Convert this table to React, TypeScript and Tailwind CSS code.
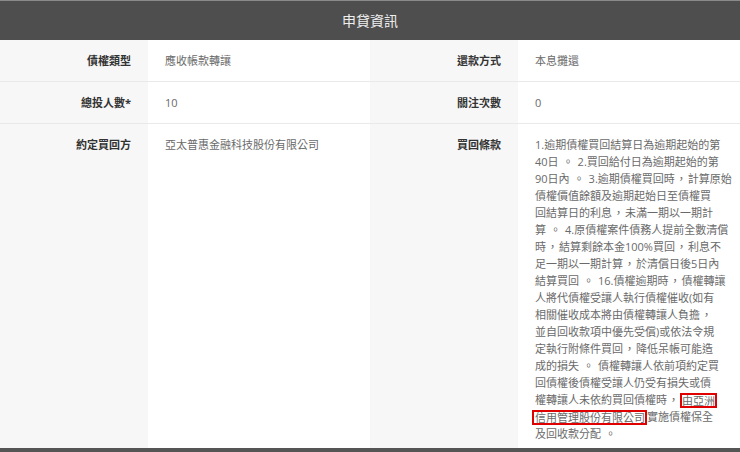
import React from "react";

const FONT = "font-['Open_Sans','Noto_Sans_CJK_TC',sans-serif]";

function fmt(s: string): React.ReactNode[] {
  const out: React.ReactNode[] = [];
  let buf = "";
  let k = 0;
  for (const ch of s) {
    if (ch === "。") {
      if (buf) out.push(buf);
      buf = "";
      out.push(
        <span key={k++} className="inline-block w-[19px] text-center">
          。
        </span>
      );
    } else if (ch === "，") {
      if (buf) out.push(buf);
      buf = "";
      out.push(
        <span key={k++} className="inline-block w-[13px] text-center">
          ，
        </span>
      );
    } else {
      buf += ch;
    }
  }
  if (buf) out.push(buf);
  return out;
}

const lines: React.ReactNode[] = [
  fmt("1.逾期債權買回結算日為逾期起始的第"),
  fmt("40日。2.買回給付日為逾期起始的第"),
  fmt("90日內。3.逾期債權買回時，計算原始"),
  fmt("債權價值餘額及逾期起始日至債權買"),
  fmt("回結算日的利息，未滿一期以一期計"),
  fmt("算。4.原債權案件債務人提前全數清償"),
  fmt("時，結算剩餘本金100%買回，利息不"),
  fmt("足一期以一期計算，於清償日後5日內"),
  fmt("結算買回。16.債權逾期時，債權轉讓"),
  fmt("人將代債權受讓人執行債權催收(如有"),
  fmt("相關催收成本將由債權轉讓人負擔，"),
  fmt("並自回收款項中優先受償)或依法令規"),
  fmt("定執行附條件買回，降低呆帳可能造"),
  fmt("成的損失。債權轉讓人依前項約定買"),
  fmt("回債權後債權受讓人仍受有損失或債"),
  <>
    {fmt("權轉讓人未依約買回債權時，")}
    <span className="inline-block border-2 border-[#e00000] leading-[11px] align-middle -mt-[2px]">由亞洲</span>
  </>,
  <>
    <span className="inline-block border-2 border-[#e00000] leading-[11px] align-middle -ml-[3px] pl-px -mt-[2px]">信用管理股份有限公司</span>
    實施債權保全
  </>,
  fmt("及回收款分配。"),
];

function Label({ children, last }: { children: React.ReactNode; last?: boolean }) {
  return (
    <div
      className={`bg-[#f7f7f7] text-right pr-[17px] font-bold text-[#333] pt-3 ${
        last ? "pb-[6px]" : "pb-3 border-b border-[#e9e9e9]"
      }`}
    >
      {children}
    </div>
  );
}

function Value({ children, last }: { children: React.ReactNode; last?: boolean }) {
  return (
    <div
      className={`bg-white pl-[17px] text-[#6a6a6a] pt-3 ${
        last ? "pb-[6px]" : "pb-3 border-b border-[#e9e9e9]"
      }`}
    >
      {children}
    </div>
  );
}

export default function App() {
  return (
    <div lang="zh-TW" className={`w-[740px] h-[452px] overflow-hidden bg-white ${FONT}`}>
      <div className="h-[40px] bg-[#4e4e4e] border-t border-[#8a8a8a] flex items-center justify-center text-[14px] text-[#eeeeee]">
        申貸資訊
      </div>
      <div className="grid grid-cols-[148px_222px_148px_222px] text-[11px] leading-[17px]">
        <Label>債權類型</Label>
        <Value>應收帳款轉讓</Value>
        <Label>還款方式</Label>
        <Value>本息攤還</Value>

        <Label>總投人數*</Label>
        <Value>10</Value>
        <Label>關注次數</Label>
        <Value>0</Value>

        <Label last>約定買回方</Label>
        <Value last>亞太普惠金融科技股份有限公司</Value>
        <Label last>買回條款</Label>
        <Value last>
          {lines.map((l, i) => (
            <div key={i} className="whitespace-nowrap h-[17px]">
              {l}
            </div>
          ))}
        </Value>
      </div>
      <div className="h-[4px] bg-[#555]" />
    </div>
  );
}
